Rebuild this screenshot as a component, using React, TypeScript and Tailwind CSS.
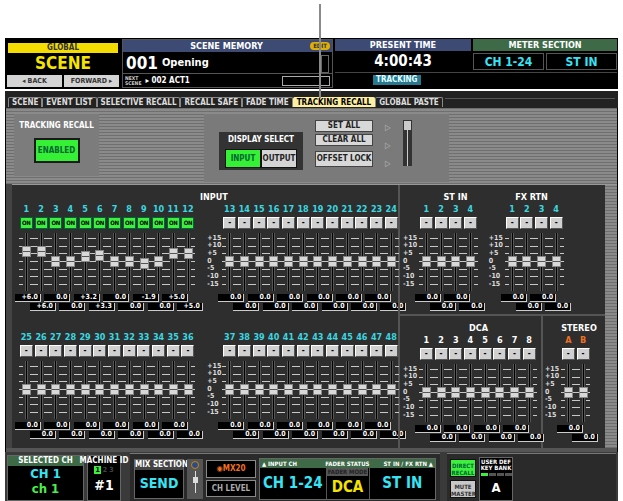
import React from "react";

const F = { fontFamily: '"DejaVu Sans Condensed","DejaVu Sans",sans-serif' };
const STRIPE = "bg-[repeating-linear-gradient(0deg,#6f6f6f_0px,#6f6f6f_1px,#8a8a8a_1px,#8a8a8a_3px)]";
const CW = 14.7;

function Fader({ db = 0, h = 58 }: { db?: number; h?: number }) {
  const top = 5, step = (h - 12) / 6;
  const y = top + 3 * step - (db / 5) * step;
  return (
    <div className="relative" style={{ height: h, width: CW }}>
      {[0, 1, 2, 3, 4, 5, 6].map((i) => (
        <div key={i} className="absolute left-0 right-0 flex justify-between" style={{ top: top + i * step }}>
          <div className="h-px w-[4px] bg-[#c8c8c8]" />
          <div className="h-px w-[4px] bg-[#c8c8c8]" />
        </div>
      ))}
      <div className="absolute top-0 bottom-0 left-[6px] w-[3px] bg-black border-x border-[#555]" />
      <div className="absolute left-[3px] w-[9px] h-[11px] bg-[#d8d8d8] border border-[#888] flex items-center" style={{ top: y - 5.5 }}>
        <div className="w-full h-px bg-[#555]" />
      </div>
    </div>
  );
}

function Scale({ h = 58, left = false }: { h?: number; left?: boolean }) {
  const top = 5, step = (h - 12) / 6;
  return (
    <div className="relative w-[16px]" style={{ height: h }}>
      {["+15", "+10", "+5", "0", "-5", "-10", "-15"].map((t, i) => (
        <div key={t} className={`absolute ${left ? "left-0" : "left-[1px]"} text-[7px] leading-none text-[#ddd]`} style={{ top: top + i * step - 3.5 }}>
          {t}
        </div>
      ))}
    </div>
  );
}

function Btn({ on }: { on?: boolean }) {
  return on ? (
    <div className="w-[13px] h-[12px] bg-[#3ef03e] border border-[#063] text-[6px] leading-[10px] text-black text-center tracking-tighter overflow-hidden">ON</div>
  ) : (
    <div className="w-[13px] h-[12px] bg-[#d0d0d0] border-t border-l border-white border-b border-r border-b-[#555] border-r-[#555] text-[8px] leading-[9px] text-black text-center">-</div>
  );
}

function Group({
  labels, color = "text-[#3ad8e0]", on = [], dbs = [], v1 = [], v2 = [],
}: { labels: string[]; color?: string; on?: boolean[]; dbs?: number[]; v1?: string[]; v2?: string[] }) {
  const box = (v: string, i: number) => (
    <div key={i} className="w-[26px] h-[8px] mr-[3.4px] bg-black border-r border-b border-[#ccc] text-[7px] leading-[7px] text-white text-right pr-[2px]">{v}</div>
  );
  return (
    <div className="flex flex-col">
      <div className="flex">
        {labels.map((l, i) => (
          <div key={i} className={`text-[9px] leading-[12px] h-[12px] text-center font-bold ${color}`} style={{ width: CW }}>{l}</div>
        ))}
      </div>
      <div className="flex mt-[2px]">
        {labels.map((_, i) => (
          <div key={i} className="flex justify-center" style={{ width: CW }}><Btn on={on[i]} /></div>
        ))}
      </div>
      <div className="flex mt-[4px]">
        {labels.map((_, i) => <Fader key={i} db={dbs[i] ?? 0} />)}
      </div>
      <div className="flex mt-[3px] ml-[-4px]">{v1.map(box)}</div>
      <div className="flex mt-[1px] ml-[11px]">{v2.map(box)}</div>
    </div>
  );
}

const range = (a: number, b: number) => Array.from({ length: b - a + 1 }, (_, i) => String(a + i));
const z = (n: number) => Array(n).fill("0.0");

function Header() {
  return (
    <div className="mx-[5px] mt-[38px] bg-black p-[1px] flex gap-[2px] h-[51px]">
      <div className="w-[114px] flex flex-col">
        <div className="h-[10px] mt-[4px] mx-[2px] bg-[#f4dc00] text-[8px] leading-[10px] font-bold text-[#333] text-center">GLOBAL</div>
        <div className="h-[20px] bg-black text-[#f4e400] text-[17px] leading-[20px] font-bold text-center">SCENE</div>
        <div className="flex gap-[2px] mt-[2px] px-[1px]">
          <div className="flex-1 h-[12px] bg-[#d4d4d4] text-[7px] leading-[12px] text-center text-[#333]">◂ BACK</div>
          <div className="flex-1 h-[12px] bg-[#d4d4d4] text-[7px] leading-[12px] text-center text-[#333]">FORWARD ▸</div>
        </div>
      </div>
      <div className="w-[211px] flex flex-col border border-[#555]">
        <div className="h-[12px] bg-[#3c4a74] text-white text-[9px] leading-[12px] font-bold flex">
          <div className="flex-1 text-center pl-[20px]">SCENE MEMORY</div>
          <div className="mr-[2px] mt-[2px] h-[8px] px-[3px] rounded-full bg-[#e0b000] text-[6px] leading-[8px] text-[#333]">EDIT</div>
        </div>
        <div className="h-[22px] flex items-end px-[3px]">
          <span className="text-white text-[17px] leading-[20px] font-bold">001</span>
          <span className="text-white text-[11px] font-bold ml-[4px] mb-[2px]">Opening</span>
          <div className="ml-auto w-[8px] h-[18px] border border-[#666]" />
        </div>
        <div className="flex items-center h-[14px] border-t border-[#555] px-[2px]">
          <div className="text-[5px] leading-[5px] text-[#ccc]">NEXT<br />SCENE</div>
          <div className="text-[8px] text-white ml-[4px]">▸ 002 ACT1</div>
          <div className="ml-auto w-[48px] h-[10px] border border-[#aaa]" />
        </div>
      </div>
      <div className="flex-1 flex flex-col">
        <div className="flex gap-[2px]">
          <div className="w-[136px] flex flex-col">
            <div className="h-[12px] bg-[#3c4a74] text-white text-[9px] leading-[12px] font-bold text-center">PRESENT TIME</div>
            <div className="h-[21px] text-white text-[15px] leading-[21px] font-bold text-center">4:00:43</div>
          </div>
          <div className="flex-1 flex flex-col">
            <div className="h-[12px] bg-[#3e6a48] text-white text-[9px] leading-[12px] font-bold text-center">METER SECTION</div>
            <div className="h-[21px] flex gap-[2px] items-center">
              <div className="flex-1 h-[17px] border border-[#555] flex items-center justify-center text-[#38e4f4] text-[12px] font-bold">CH 1-24</div>
              <div className="flex-1 h-[17px] border border-[#555] flex items-center justify-center text-[#38e4f4] text-[12px] font-bold">ST IN</div>
            </div>
          </div>
        </div>
        <div className="h-[14px] border-t border-[#444] flex items-center pl-[38px]">
          <div className="bg-[#2a7890] text-[#dff] text-[8px] leading-[10px] font-bold px-[3px]">TRACKING</div>
        </div>
      </div>
    </div>
  );
}

function Tabs() {
  const tabs = ["SCENE", "EVENT LIST", "SELECTIVE RECALL", "RECALL SAFE", "FADE TIME", "TRACKING RECALL", "GLOBAL PASTE"];
  return (
    <div className="mx-[5px] bg-[#222] pt-[6px] flex px-[3px] h-[17px] mt-[2px]">
      {tabs.map((t) => (
        <div key={t} className={`text-[8px] leading-[10px] h-[10px] px-[3px] border-l border-t border-r rounded-t-[2px] whitespace-nowrap ${t === "TRACKING RECALL" ? "bg-[#fff0a0] text-black border-[#fff0a0] font-bold" : "text-[#ddd] border-[#888]"}`}>{t}</div>
      ))}
      <div className="flex-1 border-t border-[#555] mt-[1px] ml-[2px]" />
    </div>
  );
}

function Control() {
  return (
    <div className={`h-[76px] flex ${STRIPE} px-[8px] pt-[6px]`}>
      <div className="w-[85px] h-[62px] bg-[#7c7c7c] flex flex-col items-center">
        <div className="text-[8px] text-white mt-[6px] font-bold">TRACKING RECALL</div>
        <div className="mt-[6px] w-[46px] h-[25px] bg-[#36f036] border-2 border-[#1a1a1a] text-[8px] leading-[21px] text-center font-bold text-[#063]">ENABLED</div>
      </div>
      <div className="ml-[105px] w-[245px] h-[68px] bg-[#7a7a7a] flex items-start pt-[14px] pl-[15px] gap-[12px]">
        <div className="w-[84px] h-[38px] bg-[#333] flex flex-col items-center mt-[4px]">
          <div className="text-[8px] text-white font-bold mt-[2px]">DISPLAY SELECT</div>
          <div className="flex mt-[3px]">
            <div className="w-[36px] h-[19px] bg-[#36f036] border border-[#111] text-[8px] leading-[17px] text-center text-[#063] font-bold">INPUT</div>
            <div className="w-[36px] h-[19px] bg-[#d4d4d4] border border-[#111] text-[8px] leading-[17px] text-center text-[#222] font-bold">OUTPUT</div>
          </div>
        </div>
        <div className="flex flex-col gap-[2px] -mt-[8px]">
          {["SET ALL", "CLEAR ALL", "OFFSET LOCK"].map((t, i) => (
            <div key={t} className={`w-[58px] whitespace-nowrap ${i === 2 ? "h-[16px] mt-[3px]" : "h-[12px]"} bg-[#d8d8d8] border border-[#444] text-[8px] leading-[10px] text-center text-[#222] font-bold flex items-center justify-center`}>{t}</div>
          ))}
        </div>
        <div className="flex flex-col gap-[6px] -mt-[6px] text-[#bbb] text-[8px]">
          <span>▷</span><span>▷</span><span>▷</span>
        </div>
        <div className="-mt-[8px] w-[9px] h-[46px] bg-[#333] flex flex-col items-center">
          <div className="w-[7px] h-[9px] bg-[#ccc] mt-[1px]" />
          <div className="w-[1px] flex-1 bg-[#ccc]" />
        </div>
      </div>
    </div>
  );
}

function Panel() {
  return (
    <div className="flex h-[264px] bg-[#2e2e2e] ml-[6px] border-t border-[#999]">
      <div className="w-[384px] flex flex-col">
        <div className="h-[12px] mt-[6px] text-center text-white text-[9px] font-bold pl-[20px]">INPUT</div>
        <div className="flex pl-[7px]">
          <Group labels={range(1, 12)} on={Array(12).fill(true)} dbs={[6, 6, 0, 0, 3.2, 3.3, 0, 0, -1.9, 0, 5, 5]}
            v1={["+6.0", "0.0", "+3.2", "0.0", "-1.9", "+5.0"]} v2={["+6.0", "0.0", "+3.3", "0.0", "0.0", "+5.0"]} />
          <div className="mt-[30px]"><Scale /></div>
          <Group labels={range(13, 24)} v1={z(6)} v2={z(6)} />
        </div>
        <div className="h-[12px] mt-[8px]" />
        <div className="flex pl-[7px]">
          <Group labels={range(25, 36)} v1={z(6)} v2={z(6)} />
          <div className="mt-[30px]"><Scale /></div>
          <Group labels={range(37, 48)} v1={z(6)} v2={z(6)} />
        </div>
      </div>
      <div className="w-[2px] bg-[#555] ml-[2px]" />
      <div className="flex-1 flex flex-col">
        <div className="h-[131px] flex flex-col border-b-2 border-[#555]">
          <div className="flex h-[12px] mt-[6px] text-white text-[9px] font-bold">
            <div className="w-[75px] text-center ml-[18px]">ST IN</div>
            <div className="w-[75px] text-center ml-[1px]">FX RTN</div>
          </div>
          <div className="flex pl-[3px]">
            <div className="mt-[30px]"><Scale left /></div>
            <Group labels={range(1, 4)} v1={z(2)} v2={z(2)} />
            <div className="mt-[30px]"><Scale left /></div>
            <Group labels={range(1, 4)} v1={z(2)} v2={z(2)} />
          </div>
        </div>
        <div className="flex flex-1">
          <div className="w-[143px] flex flex-col border-r-2 border-[#555]">
            <div className="h-[12px] mt-[6px] text-center text-white text-[9px] font-bold pl-[16px]">DCA</div>
            <div className="flex pl-[3px]">
              <div className="mt-[30px]"><Scale left /></div>
              <Group labels={range(1, 8)} color="text-white" v1={z(4)} v2={z(4)} />
            </div>
          </div>
          <div className="flex-1 flex flex-col">
            <div className="h-[12px] mt-[6px] text-center text-white text-[9px] font-bold pl-[10px]">STEREO</div>
            <div className="flex pl-[2px]">
              <div className="mt-[30px]"><Scale left /></div>
              <Group labels={["A", "B"]} color="text-[#f07020]" v1={z(1)} v2={z(1)} />
            </div>
          </div>
        </div>
      </div>
      <div className={`w-[12px] ${STRIPE}`} />
    </div>
  );
}

function Bottom() {
  const lbl = "text-[8px] leading-[10px] text-white font-bold whitespace-nowrap";
  return (
    <div className="mx-[5px] h-[52px] bg-[#3a3a3a] flex items-center gap-[3px] px-[2px]">
      <div className="w-[77px] h-[46px] bg-black border border-[#666] flex flex-col">
        <div className={`${lbl} bg-[#3e6a48] text-center h-[10px]`}>SELECTED CH</div>
        <div className="text-[#38e4f4] text-[13px] leading-[15px] font-bold text-center">CH 1</div>
        <div className="text-[#48f048] text-[13px] leading-[15px] font-bold text-center">ch 1</div>
      </div>
      <div className="w-[34px] h-[46px] bg-black border border-[#666] flex flex-col items-center">
        <div className={`${lbl} text-[6px] leading-[9px]`}>MACHINE ID</div>
        <div className="flex gap-[2px] text-[7px] leading-[8px]"><span className="bg-[#3ef03e] text-black px-[1px]">1</span><span className="text-[#444]">2</span><span className="text-[#444]">3</span></div>
        <div className="text-white text-[14px] font-bold leading-[22px]">#1</div>
      </div>
      <div className="ml-[6px] w-[310px] h-[50px] bg-[#2a2a2a] border-t border-[#777] flex items-center gap-[3px] px-[4px]">
        <div className="w-[50px] h-[40px] bg-black border border-[#666] flex flex-col items-center">
          <div className={`${lbl} text-[6px] leading-[10px] bg-[#444] w-full text-center`}>MIX SECTION</div>
          <div className="text-[#38e4f4] text-[14px] font-bold leading-[26px]">SEND</div>
        </div>
        <div className="w-[16px] h-[40px] bg-[#555] flex flex-col items-center">
          <div className="w-[8px] h-[8px] rounded-full bg-[#2a4a90] border border-[#c80] mt-[2px]" />
          <div className="w-[1px] h-[22px] bg-[#ddd] mt-[2px] relative"><div className="absolute -left-[2px] top-[6px] w-[5px] h-[6px] bg-[#ddd]" /></div>
        </div>
        <div className="w-[50px] flex flex-col gap-[2px]">
          <div className="h-[18px] bg-black border border-[#888] text-[#f07020] text-[8px] leading-[16px] text-center font-bold">◉MX20</div>
          <div className="h-[17px] bg-black border border-[#888] text-[#aaa] text-[8px] leading-[15px] text-center">CH LEVEL</div>
        </div>
        <div className="flex-1 h-[42px] bg-black border border-[#666] flex flex-col">
          <div className="h-[9px] bg-[#3e6a48] flex text-[6px] leading-[9px] text-white font-bold px-[2px] whitespace-nowrap">
            <span>▲ INPUT CH</span><span className="ml-auto mr-[14px]">FADER STATUS</span><span>ST IN / FX RTN ▲</span>
          </div>
          <div className="flex flex-1 items-center">
            <div className="flex-1 text-[#38e4f4] text-[15px] font-bold text-center">CH 1-24</div>
            <div className="w-[44px] flex flex-col items-center border-x border-[#555] h-full">
              <div className="text-[6px] bg-[#555] text-[#222] px-[1px] leading-[8px] whitespace-nowrap">FADER MODE</div>
              <div className="text-[#f4e400] text-[15px] font-bold leading-[22px]">DCA</div>
            </div>
            <div className="flex-1 text-[#38e4f4] text-[15px] font-bold text-center">ST IN</div>
          </div>
        </div>
      </div>
      <div className="ml-[4px] flex-1 h-[50px] bg-[#2a2a2a] border-t border-[#777] flex items-center gap-[3px] px-[3px]">
        <div className="flex flex-col gap-[3px]">
          <div className="w-[26px] h-[18px] bg-[#3ef03e] border border-[#111] text-[6px] leading-[7px] text-center text-[#063] font-bold pt-[2px]">DIRECT RECALL</div>
          <div className="w-[26px] h-[18px] bg-[#c8c8c8] border border-[#111] text-[6px] leading-[7px] text-center text-[#333] font-bold pt-[2px]">MUTE MASTER</div>
        </div>
        <div className="w-[34px] h-[44px] bg-black border border-[#666] flex flex-col items-center">
          <div className="text-[6px] leading-[6px] text-white font-bold text-center mt-[1px]">USER DEF<br />KEY BANK</div>
          <div className="flex gap-px mt-[2px]"><div className="w-[7px] h-[3px] bg-[#3ef03e]" /><div className="w-[7px] h-[3px] bg-[#555]" /><div className="w-[7px] h-[3px] bg-[#555]" /><div className="w-[7px] h-[3px] bg-[#555]" /></div>
          <div className="text-white text-[13px] font-bold leading-[24px]">A</div>
        </div>
      </div>
    </div>
  );
}

export default function App() {
  return (
    <div className="w-[623px] h-[501px] bg-white relative overflow-hidden font-bold" style={F}>
      <Header />
      <Tabs />
      <div className="mx-[5px] bg-[#444] border-x border-black">
        <Control />
        <Panel />
        <div className="h-[4px] bg-[#555]" />
      </div>
      <Bottom />
      <div className="absolute left-[319px] top-[4px] w-[2px] h-[94px] bg-[#8a8a8a]" />
    </div>
  );
}
